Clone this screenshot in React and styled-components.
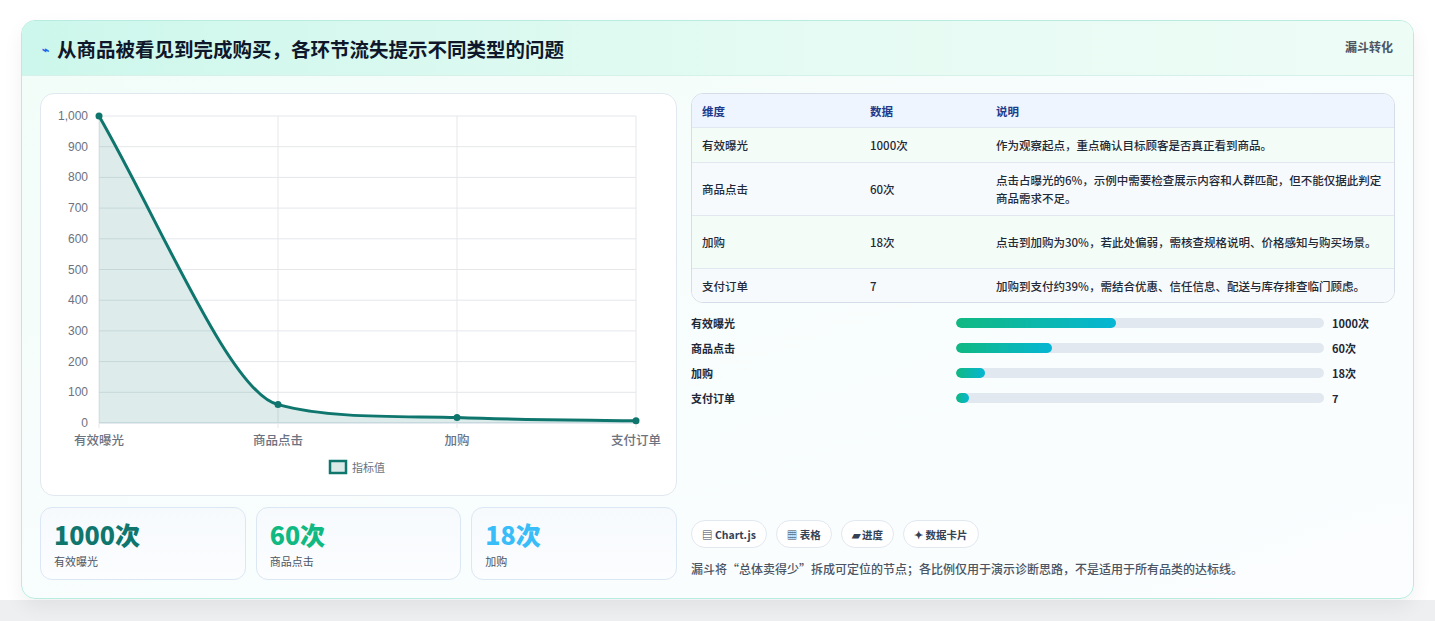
import React from "react";
import styled, { createGlobalStyle } from "styled-components";

const G = createGlobalStyle`
  body{margin:0;background:#f3f4f6;font-family:"Noto Sans CJK SC","Noto Sans",sans-serif;}
`;
const Page = styled.div`width:1435px;height:621px;padding:20px 21px 0 21px;box-sizing:border-box;background:linear-gradient(#fff 0 600px,#eeeff1 600px);`;
const Card = styled.div`height:579px;border:1px solid #b9ece0;border-radius:14px;box-sizing:border-box;overflow:hidden;
  background:linear-gradient(160deg,#f1fdf8 0%,#f7fdfc 40%,#fbfdff 100%);box-shadow:0 8px 20px rgba(0,0,0,.06);display:flex;flex-direction:column;`;
const Header = styled.div`height:55px;flex:none;display:flex;align-items:center;justify-content:space-between;padding:0 20px;box-sizing:border-box;
  background:linear-gradient(90deg,#cdf7ec,#e6fbf3 60%,#eefcf6);border-bottom:1px solid #d6f1ea;`;
const Title = styled.h1`margin:0;font-size:19.5px;font-weight:700;color:#0f172a;display:flex;align-items:center;gap:8px;`;
const Tag = styled.span`font-size:12px;font-weight:700;color:#4b5563;align-self:flex-start;margin-top:17px;`;
const Body = styled.div`flex:1;display:grid;grid-template-columns:637px 704px;gap:14px;padding:17px 18px 0 18px;`;
const Col = styled.div`display:flex;flex-direction:column;`;
const ChartBox = styled.div`height:403px;box-sizing:border-box;background:#fff;border:1px solid #e2e8f0;border-radius:14px;position:relative;`;
const Stats = styled.div`display:grid;grid-template-columns:repeat(3,1fr);gap:10px;margin-top:11px;`;
const Stat = styled.div`height:73px;box-sizing:border-box;border:1px solid #dbe7f3;border-radius:12px;background:linear-gradient(#f7fafd,#fbfdff);padding:10px 13px;`;
const StatV = styled.div`font-size:25px;font-weight:800;color:${p=>p.c};line-height:32px;font-family:"Noto Sans CJK SC",sans-serif;`;
const StatL = styled.div`font-size:11px;color:#4b5563;margin-top:3px;`;
const Table = styled.div`border:1px solid #d5dde8;border-radius:12px;overflow:hidden;background:#fff;`;
const Row = styled.div`display:grid;grid-template-columns:168px 126px 1fr;padding:0 8px 0 10px;height:${p=>p.h}px;box-sizing:border-box;align-items:center;
  background:${p=>p.head?"#eef5fe":p.alt?"#f7fafc":"#f4fcf8"};border-top:${p=>p.head?"none":"1px solid #e2e8f0"};
  font-size:11.5px;font-weight:${p=>p.head?600:500};color:${p=>p.head?"#1e3a8a":"#1f2937"};line-height:18px;`;
const Bars = styled.div`display:flex;flex-direction:column;gap:7px;margin-top:11px;`;
const BarRow = styled.div`display:grid;grid-template-columns:257px 368px 1fr;column-gap:8px;align-items:center;height:18px;font-size:11px;font-weight:600;color:#1f2937;`;
const Track = styled.div`height:10px;border-radius:5px;background:#e2e8f0;overflow:hidden;`;
const Fill = styled.div`height:100%;border-radius:5px;background:linear-gradient(90deg,#10b981,#06b6d4);`;
const Chips = styled.div`display:flex;gap:9px;margin-top:113px;`;
const Chip = styled.div`height:28px;padding:0 10px;border:1px solid #e2e8f0;border-radius:14px;background:#fff;display:flex;align-items:center;gap:4px;font-size:10.5px;font-weight:600;color:#334155;box-sizing:border-box;`;
const Note = styled.div`font-size:12px;color:#4b5563;margin-top:12px;font-weight:500;`;

const X=[58,237,416,595], y=v=>329-v*0.307;
function Chart(){
  const pts=[[X[0],y(1000)],[X[1],y(60)],[X[2],y(18)],[X[3],y(7)]];
  const d=`M${pts[0][0]},${pts[0][1]} C${120},${130} ${190},${300} ${X[1]},${pts[1][1]} C${290},${325} ${360},${322} ${X[2]},${pts[2][1]} C${480},${326} ${540},${326} ${X[3]},${pts[3][1]}`;
  return (
    <svg width="635" height="401" style={{display:"block"}}>
      {Array.from({length:11},(_,i)=>(<g key={i}>
        <line x1={58} x2={595} y1={y(i*100)} y2={y(i*100)} stroke={i===0?"#cbd5e1":"#e5e7eb"}/>
        <text x={47} y={y(i*100)+4} fontSize="12" fill="#6b7280" textAnchor="end" fontFamily="Liberation Sans">{i===10?"1,000":i*100}</text></g>))}
      {X.map(x=><line key={x} x1={x} x2={x} y1={22} y2={334} stroke="#e5e7eb"/>)}
      <path d={d+` L${X[3]},329 L${X[0]},329 Z`} fill="#0f766e" opacity=".14"/>
      <path d={d} fill="none" stroke="#0f766e" strokeWidth="3"/>
      {pts.map((p,i)=><circle key={i} cx={p[0]} cy={p[1]} r="3.5" fill="#0f766e"/>)}
      {["有效曝光","商品点击","加购","支付订单"].map((t,i)=><text key={t} x={X[i]} y={351} fontSize="12.5" fontWeight="500" fill="#6b7280" textAnchor="middle">{t}</text>)}
      <rect x={289} y={367} width={16} height={12} fill="#dbe9e7" stroke="#0f766e" strokeWidth="2.5"/>
      <text x={311} y={378} fontSize="11" fill="#6b7280">指标值</text>
    </svg>);
}

const rows=[["有效曝光","1000次","作为观察起点，重点确认目标顾客是否真正看到商品。",35],
["商品点击","60次","点击占曝光的6%，示例中需要检查展示内容和人群匹配，但不能仅据此判定商品需求不足。",53],
["加购","18次","点击到加购为30%，若此处偏弱，需核查规格说明、价格感知与购买场景。",53],
["支付订单","7","加购到支付约39%，需结合优惠、信任信息、配送与库存排查临门顾虑。",34]];
const bars=[["有效曝光",43.5,"1000次"],["商品点击",26,"60次"],["加购",8,"18次"],["支付订单",3.5,"7"]];

export default function App(){
  return (<Page><G/><Card>
    <Header><Title><span style={{fontSize:12,color:"#2563eb"}}>⌁</span>从商品被看见到完成购买，各环节流失提示不同类型的问题</Title><Tag>漏斗转化</Tag></Header>
    <Body>
      <Col>
        <ChartBox><Chart/></ChartBox>
        <Stats>
          <Stat><StatV c="#0f766e">1000次</StatV><StatL>有效曝光</StatL></Stat>
          <Stat><StatV c="#10b981">60次</StatV><StatL>商品点击</StatL></Stat>
          <Stat><StatV c="#38bdf8">18次</StatV><StatL>加购</StatL></Stat>
        </Stats>
      </Col>
      <Col>
        <Table>
          <Row head h={33}><span>维度</span><span>数据</span><span>说明</span></Row>
          {rows.map((r,i)=><Row key={i} h={r[3]} alt={i%2===1}><span>{r[0]}</span><span>{r[1]}</span><span>{r[2]}</span></Row>)}
        </Table>
        <Bars>{bars.map(b=><BarRow key={b[0]}><span>{b[0]}</span><Track><Fill style={{width:b[1]+"%"}}/></Track><span>{b[2]}</span></BarRow>)}</Bars>
        <Chips><Chip>▤ Chart.js</Chip><Chip>▦ 表格</Chip><Chip>▰ 进度</Chip><Chip>✦ 数据卡片</Chip></Chips>
        <Note>漏斗将“总体卖得少”拆成可定位的节点；各比例仅用于演示诊断思路，不是适用于所有品类的达标线。</Note>
      </Col>
    </Body>
  </Card></Page>);
}
